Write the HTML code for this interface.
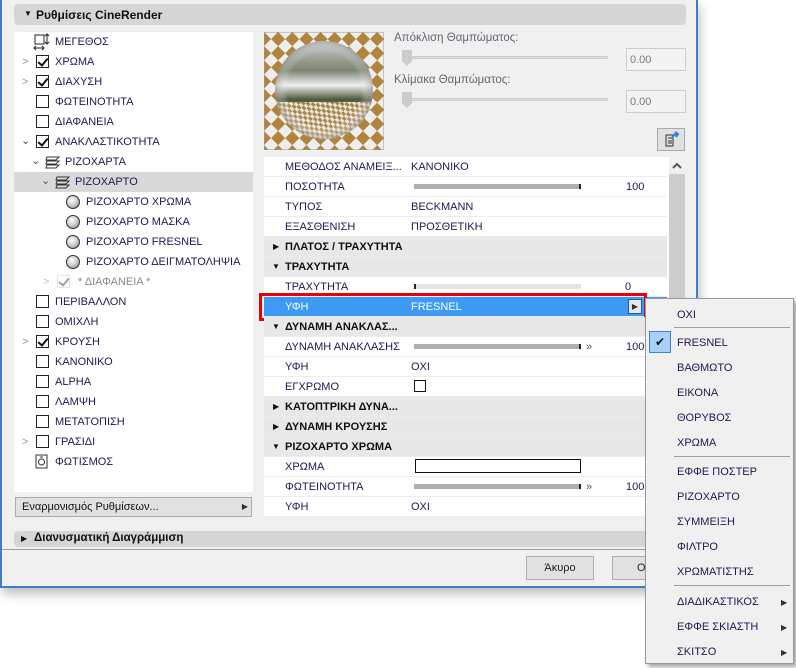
<!DOCTYPE html>
<html><head><meta charset="utf-8"><style>
*{margin:0;padding:0;box-sizing:border-box}
body{width:796px;height:668px;background:#fff;position:relative;overflow:hidden;font-family:"Liberation Sans","DejaVu Sans",sans-serif;font-size:11px;color:#1a1a50}
.a{position:absolute}
#dlg{left:0;top:0;width:698px;height:588px;background:#f0f0f0;border-left:2px solid #3c7fc8;border-right:2px solid #3c7fc8;border-bottom:2px solid #3c7fc8;box-shadow:2px 6px 10px rgba(0,0,0,.25)}
.hdr{background:#d6d6d6;border-radius:4px;font-weight:bold;color:#111;font-size:12px}
.t{position:absolute;white-space:nowrap;line-height:20px;height:20px}
.cb{position:absolute;width:13px;height:13px;border:1px solid #222;background:#fff}
.cb.on::after{content:"";position:absolute;left:3px;top:0px;width:4px;height:8px;border-right:2px solid #111;border-bottom:2px solid #111;transform:rotate(40deg)}
.chev{position:absolute;color:#999;font-size:11px}
.ball{position:absolute;width:14px;height:14px;border-radius:50%;border:1px solid #333;background:radial-gradient(circle at 40% 35%,#fff,#ccc 50%,#777)}
.row{position:absolute;left:264px;width:403px;height:20px;background:#fff;border-bottom:1px solid #ececec}
.grp{background:#e8e8e8;font-weight:bold;color:#111}
.row span{position:absolute;line-height:20px;white-space:nowrap}
.bar{position:absolute;left:150px;top:7px;width:167px;height:5px;background:#b0b0b0;border-right:2px solid #222}
.mi{position:absolute;left:677px;white-space:nowrap;line-height:14px}
.sep{position:absolute;left:674px;width:116px;height:1px;background:#a0a0a0}
.arr{position:absolute;left:781px;font-size:8px;color:#333}
</style></head><body>
<div id="dlg" class="a">
  <div class="a hdr" style="left:12px;top:4px;width:672px;height:21px"><span class="a" style="left:10px;top:5px;font-size:8px">▼</span><span class="a" style="left:22px;top:4px">Ρυθμίσεις CineRender</span></div>
  <div class="a" style="left:12px;top:32px;width:239px;height:460px;background:#fff"></div>
  <div class="a" style="left:12px;top:172px;width:239px;height:20px;background:#d9d9d9"></div>
  <svg class="a" style="left:31px;top:33px" width="18" height="18"><rect x="2" y="2" width="9" height="9" fill="none" stroke="#222"/><path d="M14 1v10M12 3l2-2 2 2M12 9l2 2 2-2M1 15h10M3 13l-2 2 2 2M9 13l2 2-2 2" stroke="#222" fill="none"/></svg>
  <div class="t" style="left:53px;top:32px">ΜΕΓΕΘΟΣ</div>
  <span class="chev" style="left:20px;top:56px">&gt;</span><div class="cb on" style="left:34px;top:55px"></div><div class="t" style="left:53px;top:52px">ΧΡΩΜΑ</div>
  <span class="chev" style="left:20px;top:76px">&gt;</span><div class="cb on" style="left:34px;top:75px"></div><div class="t" style="left:53px;top:72px">ΔΙΑΧΥΣΗ</div>
  <div class="cb" style="left:34px;top:95px"></div><div class="t" style="left:53px;top:92px">ΦΩΤΕΙΝΟΤΗΤΑ</div>
  <div class="cb" style="left:34px;top:115px"></div><div class="t" style="left:53px;top:112px">ΔΙΑΦΑΝΕΙΑ</div>
  <span class="chev" style="left:19px;top:134px;color:#555">⌄</span><div class="cb on" style="left:34px;top:135px"></div><div class="t" style="left:53px;top:132px">ΑΝΑΚΛΑΣΤΙΚΟΤΗΤΑ</div>
  <span class="chev" style="left:29px;top:154px;color:#555">⌄</span>
  <svg class="a" style="left:42px;top:154px" width="18" height="16"><path d="M3 3h12l-3 3H2zM3 7h12l-3 3H2zM3 11h12l-3 3H2z" fill="none" stroke="#333"/></svg>
  <div class="t" style="left:63px;top:152px">ΡΙΖΟΧΑΡΤΑ</div>
  <span class="chev" style="left:39px;top:174px;color:#555">⌄</span>
  <svg class="a" style="left:52px;top:174px" width="18" height="16"><path d="M3 3h12l-3 3H2zM3 7h12l-3 3H2zM3 11h12l-3 3H2z" fill="none" stroke="#333"/></svg>
  <div class="t" style="left:73px;top:172px">ΡΙΖΟΧΑΡΤΟ</div>
  <div class="ball" style="left:64px;top:195px"></div><div class="t" style="left:84px;top:192px">ΡΙΖΟΧΑΡΤΟ ΧΡΩΜΑ</div>
  <div class="ball" style="left:64px;top:215px"></div><div class="t" style="left:84px;top:212px">ΡΙΖΟΧΑΡΤΟ ΜΑΣΚΑ</div>
  <div class="ball" style="left:64px;top:235px"></div><div class="t" style="left:84px;top:232px">ΡΙΖΟΧΑΡΤΟ FRESNEL</div>
  <div class="ball" style="left:64px;top:255px"></div><div class="t" style="left:84px;top:252px">ΡΙΖΟΧΑΡΤΟ ΔΕΙΓΜΑΤΟΛΗΨΙΑ</div>
  <span class="chev" style="left:41px;top:276px;color:#bbb">&gt;</span><div class="cb on" style="left:55px;top:275px;border-color:#bbb;opacity:.4"></div><div class="t" style="left:76px;top:272px;color:#888">* ΔΙΑΦΑΝΕΙΑ *</div>
  <div class="cb" style="left:34px;top:295px"></div><div class="t" style="left:53px;top:292px">ΠΕΡΙΒΑΛΛΟΝ</div>
  <div class="cb" style="left:34px;top:315px"></div><div class="t" style="left:53px;top:312px">ΟΜΙΧΛΗ</div>
  <span class="chev" style="left:20px;top:336px">&gt;</span><div class="cb on" style="left:34px;top:335px"></div><div class="t" style="left:53px;top:332px">ΚΡΟΥΣΗ</div>
  <div class="cb" style="left:34px;top:355px"></div><div class="t" style="left:53px;top:352px">ΚΑΝΟΝΙΚΟ</div>
  <div class="cb" style="left:34px;top:375px"></div><div class="t" style="left:53px;top:372px">ALPHA</div>
  <div class="cb" style="left:34px;top:395px"></div><div class="t" style="left:53px;top:392px">ΛΑΜΨΗ</div>
  <div class="cb" style="left:34px;top:415px"></div><div class="t" style="left:53px;top:412px">ΜΕΤΑΤΟΠΙΣΗ</div>
  <span class="chev" style="left:20px;top:436px">&gt;</span><div class="cb" style="left:34px;top:435px"></div><div class="t" style="left:53px;top:432px">ΓΡΑΣΙΔΙ</div>
  <svg class="a" style="left:33px;top:453px" width="14" height="16"><rect x="1" y="2" width="11" height="13" fill="none" stroke="#333"/><circle cx="6.5" cy="9" r="3" fill="none" stroke="#333"/><path d="M5 4h3" stroke="#333" fill="none"/></svg>
  <div class="t" style="left:53px;top:452px">ΦΩΤΙΣΜΟΣ</div>
  <div class="a" style="left:13px;top:497px;width:237px;height:20px;background:#e1e1e1;border:1px solid #adadad"><span class="a" style="left:6px;top:3px;color:#111">Εναρμονισμός Ρυθμίσεων...</span><span class="a" style="right:3px;top:4px;font-size:8px;color:#333">▶</span></div>
  <svg class="a" style="left:262px;top:32px" width="120" height="118">
    <defs><pattern id="ck" width="20" height="20" patternUnits="userSpaceOnUse" patternTransform="rotate(45)"><rect width="20" height="20" fill="#eee"/><rect width="10" height="10" fill="#b0843c"/><rect x="10" y="10" width="10" height="10" fill="#b0843c"/></pattern>
    <pattern id="ck2" width="8" height="6" patternUnits="userSpaceOnUse" patternTransform="rotate(45)"><rect width="8" height="6" fill="#eee"/><rect width="4" height="3" fill="#b0843c"/><rect x="4" y="3" width="4" height="3" fill="#b0843c"/></pattern>
    <linearGradient id="sky" x1="0" y1="0" x2="0" y2="1"><stop offset="0" stop-color="#c8cccc"/><stop offset=".3" stop-color="#7a8470"/><stop offset=".45" stop-color="#eef0f0"/><stop offset=".6" stop-color="#4a5538"/><stop offset=".68" stop-color="#889070"/><stop offset="1" stop-color="#ddd"/></linearGradient>
    <radialGradient id="rim" cx="50%" cy="50%" r="50%"><stop offset=".75" stop-color="#fff" stop-opacity="0"/><stop offset="1" stop-color="#999" stop-opacity=".6"/></radialGradient>
    <clipPath id="bot"><rect x="0" y="70" width="120" height="50"/></clipPath></defs>
    <rect width="120" height="118" fill="url(#ck)" stroke="#999"/>
    <circle cx="60" cy="58" r="49" fill="url(#sky)"/>
    <circle cx="60" cy="58" r="49" fill="url(#ck2)" clip-path="url(#bot)" opacity=".9"/>
    <circle cx="60" cy="58" r="49" fill="url(#rim)"/>
  </svg>
  <div class="a" style="left:392px;top:32px;color:#667;font-size:11.5px">Απόκλιση Θαμπώματος:</div>
  <div class="a" style="left:400px;top:56px;width:206px;height:3px;background:#ddd;border:1px solid #ccc"></div>
  <div class="a" style="left:400px;top:50px;width:10px;height:16px;background:#ccc;clip-path:polygon(0 0,100% 0,100% 70%,50% 100%,0 70%)"></div>
  <div class="a" style="left:624px;top:48px;width:60px;height:23px;border:1px solid #ccc;background:#f3f3f3;color:#778;padding:5px 3px">0.00</div>
  <div class="a" style="left:392px;top:74px;color:#667;font-size:11.5px">Κλίμακα Θαμπώματος:</div>
  <div class="a" style="left:400px;top:98px;width:206px;height:3px;background:#ddd;border:1px solid #ccc"></div>
  <div class="a" style="left:400px;top:92px;width:10px;height:16px;background:#ccc;clip-path:polygon(0 0,100% 0,100% 70%,50% 100%,0 70%)"></div>
  <div class="a" style="left:624px;top:90px;width:60px;height:23px;border:1px solid #ccc;background:#f3f3f3;color:#778;padding:5px 3px">0.00</div>
  <div class="a" style="left:655px;top:128px;width:28px;height:23px;border:1px solid #aaa;background:#e1e1e1"><svg width="26" height="21"><path d="M8 6h7v11H8zM10 9h4M10 12h4M10 14h4" stroke="#333" fill="none"/><path d="M14 10q1-5 5-5M17 3l3 2-2 3" stroke="#2b7de0" stroke-width="2" fill="none"/></svg></div>
  <div class="a" style="left:262px;top:157px;width:405px;height:360px;background:#fff"></div>
  <div class="a" style="left:667px;top:157px;width:16px;height:360px;background:#f0f0f0"><div class="a" style="left:0;top:17px;width:16px;height:343px;background:#cdcdcd"></div><svg class="a" style="left:3px;top:5px" width="10" height="7"><path d="M1 6l4-4 4 4" stroke="#555" stroke-width="2" fill="none"/></svg></div>
</div>
<div class="row" style="top:157px"><span style="left:21px">ΜΕΘΟΔΟΣ ΑΝΑΜΕΙΞ...</span><span style="left:147px">ΚΑΝΟΝΙΚΟ</span></div>
<div class="row" style="top:177px"><span style="left:21px">ΠΟΣΟΤΗΤΑ</span><div class="bar"></div><span style="left:362px">100</span></div>
<div class="row" style="top:197px"><span style="left:21px">ΤΥΠΟΣ</span><span style="left:147px">BECKMANN</span></div>
<div class="row" style="top:217px"><span style="left:21px">ΕΞΑΣΘΕΝΙΣΗ</span><span style="left:147px">ΠΡΟΣΘΕΤΙΚΗ</span></div>
<div class="row grp" style="top:237px"><span style="left:9px;font-size:8px">▶</span><span style="left:21px">ΠΛΑΤΟΣ / ΤΡΑΧΥΤΗΤΑ</span></div>
<div class="row grp" style="top:257px"><span style="left:8px;font-size:8px">▼</span><span style="left:21px">ΤΡΑΧΥΤΗΤΑ</span></div>
<div class="row" style="top:277px"><span style="left:21px">ΤΡΑΧΥΤΗΤΑ</span><div class="bar" style="background:#e4e4e4;border-right:none;border-left:2px solid #222"></div><span style="left:361px">0</span></div>
<div class="row" style="top:297px;background:#3d9bf5;color:#fff"><span style="left:21px">ΥΦΗ</span><span style="left:147px">FRESNEL</span><div class="a" style="left:364px;top:2px;width:14px;height:15px;border:1px solid #1c5fb0;background:#e8e8e8;color:#333;font-size:8px;text-align:center;line-height:13px">▶</div></div>
<div class="a" style="left:259px;top:293px;width:388px;height:28px;border:3px solid #e8000a"></div>
<div class="row grp" style="top:317px"><span style="left:8px;font-size:8px">▼</span><span style="left:21px">ΔΥΝΑΜΗ ΑΝΑΚΛΑΣ...</span></div>
<div class="row" style="top:337px"><span style="left:21px">ΔΥΝΑΜΗ ΑΝΑΚΛΑΣΗΣ</span><div class="bar"></div><span style="left:322px;color:#555">»</span><span style="left:362px">100</span></div>
<div class="row" style="top:357px"><span style="left:21px">ΥΦΗ</span><span style="left:147px">ΟΧΙ</span></div>
<div class="row" style="top:377px"><span style="left:21px">ΕΓΧΡΩΜΟ</span><div class="a" style="left:150px;top:3px;width:12px;height:12px;border:1px solid #111"></div></div>
<div class="row grp" style="top:397px"><span style="left:9px;font-size:8px">▶</span><span style="left:21px">ΚΑΤΟΠΤΡΙΚΗ ΔΥΝΑ...</span></div>
<div class="row grp" style="top:417px"><span style="left:9px;font-size:8px">▶</span><span style="left:21px">ΔΥΝΑΜΗ ΚΡΟΥΣΗΣ</span></div>
<div class="row grp" style="top:437px"><span style="left:8px;font-size:8px">▼</span><span style="left:21px">ΡΙΖΟΧΑΡΤΟ ΧΡΩΜΑ</span></div>
<div class="row" style="top:457px"><span style="left:21px">ΧΡΩΜΑ</span><div class="a" style="left:151px;top:2px;width:166px;height:14px;border:1px solid #111"></div></div>
<div class="row" style="top:477px"><span style="left:21px">ΦΩΤΕΙΝΟΤΗΤΑ</span><div class="bar"></div><span style="left:322px;color:#555">»</span><span style="left:362px">100</span></div>
<div class="row" style="top:497px"><span style="left:21px">ΥΦΗ</span><span style="left:147px">ΟΧΙ</span></div>
<div class="a hdr" style="left:14px;top:531px;width:670px;height:16px;font-size:11.5px"><span class="a" style="left:7px;top:3px;font-size:8px">▶</span><span class="a" style="left:20px;top:1px">Διανυσματική Διαγράμμιση</span></div>
<div class="a" style="left:2px;top:549px;width:694px;height:1px;background:#a0a0a0"></div>
<div class="a" style="left:526px;top:556px;width:68px;height:24px;border:1px solid #adadad;background:#e1e1e1;text-align:center;line-height:22px;color:#222">Άκυρο</div>
<div class="a" style="left:612px;top:556px;width:68px;height:24px;border:1px solid #adadad;background:#e1e1e1;line-height:22px;color:#222;padding-left:24px">OK</div>
<div class="a" style="left:645px;top:298px;width:149px;height:366px;background:#f0f0f0;border:1px solid #999;box-shadow:3px 3px 4px rgba(0,0,0,.35)"></div>
<div class="mi" style="top:308px">ΟΧΙ</div>
<div class="sep" style="top:327px"></div>
<div class="a" style="left:649px;top:331px;width:22px;height:22px;background:#a8d0f8;border:1px solid #3c82d0;text-align:center;line-height:20px;font-size:12px;color:#111">✔</div>
<div class="mi" style="top:336px">FRESNEL</div>
<div class="mi" style="top:361px">ΒΑΘΜΩΤΟ</div>
<div class="mi" style="top:386px">ΕΙΚΟΝΑ</div>
<div class="mi" style="top:411px">ΘΟΡΥΒΟΣ</div>
<div class="mi" style="top:436px">ΧΡΩΜΑ</div>
<div class="sep" style="top:456px"></div>
<div class="mi" style="top:465px">ΕΦΦΕ ΠΟΣΤΕΡ</div>
<div class="mi" style="top:490px">ΡΙΖΟΧΑΡΤΟ</div>
<div class="mi" style="top:515px">ΣΥΜΜΕΙΞΗ</div>
<div class="mi" style="top:540px">ΦΙΛΤΡΟ</div>
<div class="mi" style="top:565px">ΧΡΩΜΑΤΙΣΤΗΣ</div>
<div class="sep" style="top:585px"></div>
<div class="mi" style="top:595px">ΔΙΑΔΙΚΑΣΤΙΚΟΣ</div><span class="arr" style="top:598px">▶</span>
<div class="mi" style="top:620px">ΕΦΦΕ ΣΚΙΑΣΤΗ</div><span class="arr" style="top:623px">▶</span>
<div class="mi" style="top:645px">ΣΚΙΤΣΟ</div><span class="arr" style="top:648px">▶</span>
</body></html>
